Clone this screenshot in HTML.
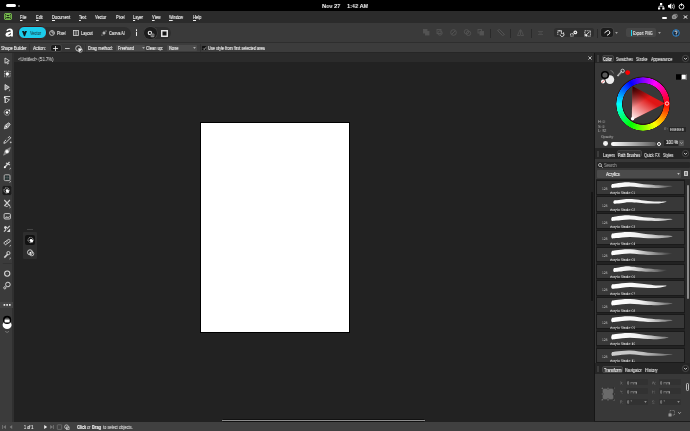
<!DOCTYPE html>
<html><head><meta charset="utf-8">
<style>
*{margin:0;padding:0;box-sizing:border-box}
html,body{width:690px;height:431px;overflow:hidden;background:#222;font-family:"Liberation Sans",sans-serif;color:#d8d8d8;position:relative}
.a{position:absolute}
.t{position:absolute;white-space:nowrap;line-height:1;transform-origin:0 0;transform:scaleX(.78);font-size:5px;color:#e4e4e4;-webkit-text-stroke:.15px currentColor;will-change:transform}
#top{left:0;top:0;width:690px;height:10.6px;background:#000}
#menu{left:0;top:10.6px;width:690px;height:12.6px;background:#2b2b2b}
#tool{left:0;top:23.2px;width:690px;height:19.8px;background:#3a3a3a}
#ctx{left:0;top:42px;width:690px;height:11.4px;background:#3c3c3c;border-top:1px solid #2e2e2e;border-bottom:.8px solid #262626}
#ltool{left:0;top:53px;width:14px;height:369px;background:#3b3b3b}
#tabbar{left:14px;top:53.4px;width:580px;height:8.3px;background:#2b2b2b}
#canvas{left:14px;top:61.6px;width:580px;height:360.4px;background:#222}
#page{left:200px;top:122px;width:150px;height:211px;background:#fff;border:1px solid #000}
#status{left:0;top:422.3px;width:690px;height:8.7px;background:#404040}
#rp{left:594px;top:53px;width:96px;height:369.3px;background:#1c1c1c}
.m{font-size:5.6px;color:#ececec;transform:scaleX(.71)}
.ic{position:absolute;overflow:visible}
</style></head><body>
<div id="tool" class="a"></div>
<div id="ctx" class="a"></div>
<div id="ltool" class="a"></div>
<div id="tabbar" class="a"></div>
<div id="canvas" class="a"></div>
<div id="page" class="a"></div>
<div id="status" class="a"></div>
<div id="rp" class="a"></div>
<div id="top" class="a"></div>
<div class="a" style="left:5.5px;top:4px;width:10.5px;height:3px;background:#fff;border-radius:1.5px"></div>
<div class="a" style="left:18px;top:4.5px;width:2px;height:2px;background:#777;border-radius:1px"></div>
<div class="t" style="left:322px;top:2.7px;font-size:6px;font-weight:bold;color:#fff;-webkit-text-stroke:0;transform:scaleX(.93)">Nov 27</div><div class="t" style="left:346.5px;top:2.7px;font-size:6px;font-weight:bold;color:#fff;-webkit-text-stroke:0;transform:scaleX(.93)">1:42 AM</div>
<svg class="a" style="left:657px;top:2px" width="30" height="8" viewBox="0 0 30 8">
 <g fill="#fff">
  <rect x="3" y="1" width="2.2" height="2"/><rect x="1" y="5.5" width="2.2" height="2"/><rect x="5.3" y="5.5" width="2.2" height="2"/>
  <path d="M4 3v1.2H2v1.3M4 4.2h2.4v1.3" stroke="#fff" stroke-width=".7" fill="none"/>
  <path d="M11 3h1.3l2-1.7v6l-2-1.7H11z"/>
  <path d="M15.3 2.8q1 1.7 0 3.4M16.6 1.8q1.7 2.7 0 5.4" stroke="#fff" stroke-width=".7" fill="none"/>
  <circle cx="24.5" cy="4.7" r="2.4" stroke="#fff" stroke-width=".9" fill="none"/>
  <rect x="24.1" y="1.3" width=".8" height="2.8"/>
 </g>
</svg>

<div id="menu" class="a"></div>
<svg class="ic" style="left:4px;top:13.2px" width="8" height="7" viewBox="0 0 8 7"><rect x=".2" y=".1" width="7.6" height="6.8" rx="1.7" fill="#8ee05e"/><rect x=".9" y=".8" width="6.2" height="5.4" rx="1" fill="#1d2a15"/><rect x="1.5" y="1.3" width="5" height="4.5" rx="1.2" fill="#8ee05e"/><rect x="2.4" y="1.9" width="3.2" height="1.2" rx=".6" fill="#1d2a15"/><rect x="2.2" y="3.7" width="3.6" height="1.5" rx=".7" fill="#1d2a15"/></svg>
<div class="t m" style="left:19.5px;top:14.8px"><u style="text-decoration-thickness:.5px;text-underline-offset:.6px">F</u>ile</div>
<div class="t m" style="left:35.5px;top:14.8px"><u style="text-decoration-thickness:.5px;text-underline-offset:.6px">E</u>dit</div>
<div class="t m" style="left:51.5px;top:14.8px"><u style="text-decoration-thickness:.5px;text-underline-offset:.6px">D</u>ocument</div>
<div class="t m" style="left:78.5px;top:14.8px"><u style="text-decoration-thickness:.5px;text-underline-offset:.6px">T</u>ext</div>
<div class="t m" style="left:95px;top:14.8px">Vector</div>
<div class="t m" style="left:115.5px;top:14.8px">Pixel</div>
<div class="t m" style="left:132.5px;top:14.8px"><u style="text-decoration-thickness:.5px;text-underline-offset:.6px">L</u>ayer</div>
<div class="t m" style="left:151.5px;top:14.8px"><u style="text-decoration-thickness:.5px;text-underline-offset:.6px">V</u>iew</div>
<div class="t m" style="left:169px;top:14.8px"><u style="text-decoration-thickness:.5px;text-underline-offset:.6px">W</u>indow</div>
<div class="t m" style="left:192.5px;top:14.8px"><u style="text-decoration-thickness:.5px;text-underline-offset:.6px">H</u>elp</div>
<div class="a" style="left:661.5px;top:16.5px;width:5px;height:2px;background:#fff;border-radius:1px"></div>
<svg class="ic" style="left:671.8px;top:14.3px" width="5.5" height="5" viewBox="0 0 5.5 5"><rect x="1.6" y=".4" width="3.5" height="3" rx=".5" fill="none" stroke="#aaa" stroke-width=".7"/><rect x=".4" y="1.6" width="3.5" height="3" rx=".5" fill="#777" stroke="#bbb" stroke-width=".7"/></svg>
<svg class="a" style="left:682.5px;top:14.5px" width="5" height="4" viewBox="0 0 5 4"><path d="M.6.4 4.4 3.6M4.4.4.6 3.6" stroke="#fff" stroke-width=".9"/></svg>
<!-- toolbar -->
<svg class="ic" style="left:4.6px;top:28.4px" width="8.5" height="8.8" viewBox="0 0 8.5 8.8"><path d="M1.2 2.4Q2.6.2 5.2.4 8 .7 7.9 3.4V8.5H5.9V7.8Q4.8 8.8 3 8.7.3 8.5.4 6.4.6 4.3 3.4 3.9L5.9 3.5Q5.9 2.2 4.6 2.1 3.4 2 2.6 3.1Z" fill="#fff"/><path d="M5.9 4.8 2.6 7.3Q4.6 7.6 5.9 6.3Z" fill="#3a3a3a"/></svg>
<div class="a" style="left:17px;top:26.6px;width:113.5px;height:13px;background:#2e2e2e;border-radius:6.5px"></div>
<div class="a" style="left:18px;top:26.3px;width:28.5px;height:13px;background:#1ccbea;border:1px solid #3e1a1a;border-radius:6px"></div>
<svg class="ic" style="left:22.3px;top:30.5px" width="5" height="5.4" viewBox="0 0 5 5.4"><path d="M0 0H1.9L2.5 1.1 3.1 0H5L3.1 5Q2.5 5.6 1.9 5Z" fill="#0e1c20"/></svg>
<div class="t" style="left:29.6px;top:30.8px;color:#1b5664">Vector</div>
<svg class="ic" style="left:48.7px;top:30px" width="6" height="6" viewBox="0 0 6 6"><circle cx="3" cy="3" r="2.4" fill="none" stroke="#d8d8d8" stroke-width=".8"/><path d="M3 .6V3h2.4" fill="none" stroke="#d8d8d8" stroke-width=".8"/></svg>
<div class="t" style="left:56.8px;top:30.8px">Pixel</div>
<svg class="ic" style="left:73px;top:30px" width="6" height="6" viewBox="0 0 6 6"><rect x=".5" y=".5" width="5" height="5" fill="none" stroke="#d8d8d8" stroke-width=".8"/><path d="M2.2.5v5M3.8.5v5" stroke="#d8d8d8" stroke-width=".6"/></svg>
<div class="t" style="left:80.9px;top:30.8px">Layout</div>
<svg class="ic" style="left:101px;top:30px" width="6" height="6" viewBox="0 0 6 6"><path d="M3 .5 3.6 2.4 5.5 3 3.6 3.6 3 5.5 2.4 3.6.5 3 2.4 2.4z" fill="#e0e0e0"/><circle cx="5" cy="1" r=".6" fill="#e0e0e0"/><circle cx="1" cy="5" r=".5" fill="#e0e0e0"/></svg>
<div class="t" style="left:108.7px;top:30.8px">Canva AI</div>
<div class="a" style="left:135.7px;top:29.2px;width:1.6px;height:7.2px;background:repeating-linear-gradient(#ececec 0 1.9px,#555 1.9px 2.6px);border-radius:.6px"></div>
<div class="a" style="left:143px;top:26.9px;width:27.8px;height:12.4px;background:#2e2e2e;border-radius:6.2px"></div>
<div class="a" style="left:144.2px;top:27.4px;width:12.4px;height:11.4px;background:#1d1d1d;box-shadow:0 0 0 .6px #474747;border-radius:5.7px"></div>
<svg class="ic" style="left:147px;top:29.5px" width="8" height="8" viewBox="0 0 8 8"><circle cx="2.9" cy="2.9" r="2.2" fill="#e8e8e8"/><circle cx="2.9" cy="2.9" r="1.1" fill="#1d1d1d"/><rect x="3.6" y="3.5" width="3.8" height="3.8" rx="1" fill="#8a8a8a"/><circle cx="4.8" cy="5" r=".5" fill="#222"/><circle cx="6.2" cy="5" r=".5" fill="#222"/></svg>
<svg class="ic" style="left:160.6px;top:29.8px" width="7" height="7" viewBox="0 0 7 7"><rect x=".75" y=".75" width="5.5" height="5.5" fill="#1d1d1d" stroke="#f0f0f0" stroke-width="1.4"/><rect x="2.5" y="2.5" width="2" height="2" fill="#111"/></svg>
<!-- right side dim icons -->
<g>
<svg class="ic" style="left:423px;top:29.3px" width="62" height="7" viewBox="0 0 62 7">
 <g fill="none" stroke="#535353" stroke-width=".9">
  <rect x=".5" y=".5" width="3.5" height="3.5" fill="#535353"/><rect x="2.5" y="2.5" width="3.5" height="3.5" fill="#535353"/>
  <rect x="14" y=".5" width="4" height="4"/><circle cx="17" cy="4" r="2.2"/>
  <circle cx="30.5" cy="3.5" r="2.8"/><path d="M29 5l3-3"/>
  <circle cx="43.5" cy="2.8" r="2.2"/><circle cx="45.5" cy="4.3" r="2.2"/>
  <rect x="55" y=".5" width="3.5" height="3.5"/><rect x="57" y="2.5" width="3.5" height="3.5" fill="#535353"/>
 </g>
</svg>
</g>
<div class="a" style="left:490px;top:28.5px;width:.8px;height:9px;background:#2a2a2a"></div>
<svg class="ic" style="left:497px;top:29.3px" width="8" height="7" viewBox="0 0 8 7"><path d="M.5 1.5l2-1 5 5-2 1z" fill="none" stroke="#535353" stroke-width=".9"/></svg>
<div class="a" style="left:510.3px;top:28.5px;width:.8px;height:9px;background:#2a2a2a"></div>
<svg class="ic" style="left:517px;top:29.3px" width="7" height="7" viewBox="0 0 7 7"><path d="M3.5.5v6M3 .8.5 6.5H3M4 .8l2.5 5.7H4" fill="none" stroke="#535353" stroke-width=".8"/></svg>
<div class="a" style="left:530.5px;top:28.5px;width:.8px;height:9px;background:#2a2a2a"></div>
<svg class="ic" style="left:538px;top:31px" width="5" height="4" viewBox="0 0 5 4"><path d="M0 .5h5M1 2h3M0 3.5h5" stroke="#535353" stroke-width=".7"/></svg>
<div class="a" style="left:553.6px;top:27.8px;width:40.5px;height:9.6px;background:#2f2f2f;border-radius:2.5px"></div>
<svg class="ic" style="left:556.5px;top:29.5px" width="36" height="7" viewBox="0 0 36 7">
 <g fill="none" stroke="#ececec" stroke-width=".8">
  <path d="M.8 4.8V.8h4" stroke-dasharray="1.1 .6"/><path d="M.8.8h3.6v3.2" />
  <path d="M3.2 4.6a1.9 1.9 0 1 0 3.3-1.3" stroke-width=".9"/><path d="M6.6 2.2v1.4H5.2" stroke-width=".7"/>
  <rect x="13.6" y="3.6" width="2.6" height="2.6" stroke-dasharray="1 .5"/>
  <circle cx="18.3" cy="2.4" r="1.9" fill="#ececec" stroke="none"/><circle cx="18.3" cy="2.4" r=".6" fill="#2e2e2e" stroke="none"/>
  <rect x="27.8" y=".8" width="5.6" height="5.4" stroke-dasharray="1.2 .6"/>
  <path d="M28.4 5.8 32.6 1.6" stroke-width=".9"/><path d="M28.3 3.3v2.6h2.6z" fill="#ececec" stroke="none"/>
 </g>
</svg>
<div class="a" style="left:597.2px;top:28.5px;width:.8px;height:9px;background:#2a2a2a"></div>
<div class="a" style="left:601.2px;top:28.1px;width:11.7px;height:8.6px;background:#1c1c1c;box-shadow:0 0 0 .8px #444;border-radius:2.5px"></div>
<svg class="ic" style="left:598px;top:26px" width="18" height="13" viewBox="598 26 18 13"><path d="M604.5 32.9 607 30.9A1.85 1.85 0 0 1 608.9 34.2L607 35.3" fill="none" stroke="#f2f2f2" stroke-width="1"/></svg>
<svg class="ic" style="left:615.2px;top:31.8px" width="3" height="2" viewBox="0 0 3 2"><path d="M.1.3H2.9L1.5 1.8Z" fill="#c0c0c0"/></svg>
<div class="a" style="left:626.2px;top:28.4px;width:30.2px;height:8.6px;background:#464646;border-radius:2px"></div>
<div class="a" style="left:630.8px;top:29.6px;width:1.2px;height:6px;background:#1ed2ee"></div>
<div class="t" style="left:633.3px;top:30.5px;color:#e0e0e0;transform:scaleX(.74)">Export PNG</div>
<svg class="ic" style="left:658px;top:32px" width="3" height="2" viewBox="0 0 3 2"><path d="M.1.3H2.9L1.5 1.8Z" fill="#c0c0c0"/></svg>
<svg class="ic" style="left:672px;top:29px" width="8" height="8" viewBox="0 0 8 8"><circle cx="4" cy="4" r="3.3" fill="#1b2a3a" stroke="#2d8fe0" stroke-width=".9"/><path d="M2.9 3a1.1 1.1 0 1 1 1.3 1.1v.9" fill="none" stroke="#fff" stroke-width=".8"/><rect x="3.8" y="5.6" width=".8" height=".8" fill="#fff"/></svg>
<!-- context toolbar -->
<div class="t" style="left:1.4px;top:46px;color:#e8e8e8;transform:scaleX(.81)">Shape Builder</div>
<div class="a" style="left:29.3px;top:44px;width:.8px;height:8px;background:#333"></div>
<div class="t" style="left:33.3px;top:46px;color:#e8e8e8;transform:scaleX(.84)">Action:</div>
<div class="a" style="left:50px;top:44.4px;width:34px;height:7.4px;background:#363636;border-radius:1.5px"></div>
<div class="a" style="left:50.8px;top:45px;width:9.8px;height:6.2px;background:#1e1e1e;box-shadow:0 0 0 .7px #4a4a4a;border-radius:1.5px"></div>
<svg class="ic" style="left:53.4px;top:45.8px" width="5" height="5" viewBox="0 0 5 5"><path d="M2.5 0v5M0 2.5h5" stroke="#f0f0f0" stroke-width=".8"/></svg>
<svg class="ic" style="left:64.8px;top:47.6px" width="5" height="1" viewBox="0 0 5 1"><path d="M0 .5h4.7" stroke="#bdbdbd" stroke-width="1"/></svg>
<svg class="ic" style="left:74.8px;top:44.6px" width="8" height="8" viewBox="0 0 8 8"><circle cx="3.4" cy="3.4" r="2.7" fill="none" stroke="#d8d8d8" stroke-width=".8"/><path d="M3.2 3.2 7.4 4.6 5.6 5.4 4.8 7.4z" fill="#f2f2f2"/><circle cx="5.3" cy="5.3" r="2" fill="none" stroke="#d8d8d8" stroke-width=".6"/></svg>
<div class="a" style="left:84.5px;top:44px;width:.8px;height:8px;background:#333"></div>
<div class="t" style="left:88px;top:46px;color:#e8e8e8;transform:scaleX(.82)">Drag method:</div>
<div class="a" style="left:116.2px;top:45px;width:29px;height:6px;background:#4a4a4a;border-radius:1px"></div>
<div class="t" style="left:118px;top:46px;color:#e8e8e8;transform:scaleX(.75)">Freehand</div>
<svg class="ic" style="left:142.2px;top:47px" width="3" height="2" viewBox="0 0 3 2"><path d="M.1.3H2.9L1.5 1.8Z" fill="#c8c8c8"/></svg>
<div class="t" style="left:146.4px;top:46px;color:#e8e8e8;transform:scaleX(.8)">Clean up:</div>
<div class="a" style="left:167px;top:45px;width:30px;height:6px;background:#4a4a4a;border-radius:1px"></div>
<div class="t" style="left:168.5px;top:46px;color:#e8e8e8">None</div>
<svg class="ic" style="left:192.8px;top:47px" width="3" height="2" viewBox="0 0 3 2"><path d="M.1.3H2.9L1.5 1.8Z" fill="#c8c8c8"/></svg>
<div class="a" style="left:199.5px;top:44px;width:.8px;height:8px;background:#333"></div>
<div class="a" style="left:202.2px;top:46px;width:4px;height:4px;background:#111;border-radius:.5px"></div>
<svg class="ic" style="left:202.7px;top:46.6px" width="3" height="3" viewBox="0 0 3 3"><path d="M.3 1.6 1.2 2.5 2.8.4" fill="none" stroke="#fff" stroke-width=".6"/></svg>
<div class="t" style="left:208px;top:46px;color:#e8e8e8">Use style from first selected area</div>
<!-- left toolbar -->
<div class="a" style="left:12.4px;top:53px;width:1.6px;height:369px;background:#303030"></div>
<svg class="ic" style="left:0;top:53px" width="14" height="290" viewBox="0 53 14 290">
 <g fill="none" stroke="#d6d6d6" stroke-width=".9" stroke-linejoin="round">
  <!-- 1 move -->
  <path d="M5 58l4.3 2.8-1.9.7 1 2-1 .5-1-2-1.4 1.3z"/>
  <!-- 2 node glow -->
  <g stroke="#cfcfcf" stroke-width=".8" stroke-dasharray="1 .8"><rect x="4.5" y="71.2" width="5.6" height="5.6"/></g>
  <circle cx="7.3" cy="74" r="1.7" fill="#fff" stroke="none"/>
  <!-- 3 node -->
  <path d="M5 84.5l4.3 2.8-4.3 2.8z" fill="#9a9a9a"/>
  <path d="M9.6 89.5q.6 1.3-.8 1.6" stroke-width=".7"/>
  <!-- 4 corner -->
  <path d="M4.2 96.5h6M4.7 97.5l4.8 2.3-3.3 3" />
  <path d="M5.2 98v5" stroke-width="1.3"/>
  <circle cx="4.6" cy="97.5" r=".8" fill="#fff" stroke="none"/>
  <!-- 5 gear/target -->
  <circle cx="7" cy="112.5" r="2.8" stroke-dasharray="1.2 .7"/>
  <circle cx="7" cy="112.5" r="1.3" fill="#fff" stroke="none"/>
  <circle cx="9.3" cy="110.2" r=".8" fill="#fff" stroke="none"/>
  <!-- 6 pen -->
  <path d="M4.3 128.8l1-3.6 3.5-2.4 1.4 1.4-2.4 3.5z" fill="#8a8a8a"/>
  <circle cx="6.4" cy="126.5" r=".7" fill="#fff" stroke="none"/>
  <!-- 7 pencil -->
  <path d="M4.4 141.5l5-5 1.3 1.3-5 5-1.8.5z" stroke-width="1"/>
  <path d="M6 140l2.2-2.2" stroke="#222" stroke-width=".8"/>
  <circle cx="10.7" cy="142.3" r=".9" fill="#bbb" stroke="none"/>
  <!-- 8 brush glow -->
  <path d="M3.6 155.2 5.4 150.4 10.4 147.6 8.6 152.4z" fill="#6e6e6e" stroke="#a8a8a8" stroke-width=".6"/>
  <circle cx="7" cy="151.4" r="1.5" fill="#fff" stroke="none"/>
  <circle cx="7" cy="151.4" r="2.4" fill="#fff" fill-opacity=".25" stroke="none"/>
  <!-- 9 paint -->
  <path d="M4.5 167.5l5-5.5M6 163l4 2" stroke-width="1.3" stroke="#d0d0d0"/>
  <circle cx="4.8" cy="167.2" r="1" fill="#fff" stroke="none"/>
  <path d="M10.3 167.8q.6 1.2-.8 1.5" stroke-width=".7"/>
  <!-- 10 rect -->
  <rect x="4.2" y="174.8" width="5.8" height="5.8" rx="1" stroke="#b0b0b0" stroke-width="1"/>
  <rect x="5.2" y="175.8" width="3.8" height="3.8" fill="#1e3030" stroke="none"/>
  <path d="M7.1 175.8v3.8M5.2 177.7h3.8" stroke="#777" stroke-width=".4"/>
  <path d="M10.3 181q.6 1.2-.8 1.5" stroke-width=".7"/>
 </g>
 <!-- 11 selected -->
 <rect x="2.1" y="185.5" width="9.7" height="10" rx="2" fill="#1c1c1c" stroke="#474747" stroke-width=".5"/>
 <g fill="none" stroke="#d6d6d6" stroke-width=".9">
  <circle cx="6.6" cy="190.4" r="2.6" stroke-dasharray="1 .7"/>
  <path d="M6.3 190.2h2.6v2.6h-2.6z" fill="#fff" stroke="none"/>
  <circle cx="7.1" cy="190.6" r="1.3" fill="#fff" stroke="none"/>
  <!-- 12 crop -->
  <path d="M4.3 200l5.6 6M9.9 200l-5.6 6" stroke-width="1.1" stroke="#cfcfcf"/>
  <path d="M5 205.5q1 1.6 2.8.8" stroke-width=".9"/>
  <path d="M10.3 206.5q.6 1.2-.8 1.5" stroke-width=".7"/>
  <!-- 13 image -->
  <rect x="4.1" y="213.6" width="6.3" height="5.4" rx="1" stroke-width=".9"/>
  <path d="M4.8 218.3l2-1.6 1.3 1 1.6-1.3" fill="#ddd" stroke-width=".7"/>
  <!-- 14 transparency -->
  <ellipse cx="5.6" cy="227.6" rx="1.6" ry="1.4" fill="#d8d8d8" stroke="none" transform="rotate(40 5.6 227.6)"/>
  <path d="M9.8 225.8 4 231.6" stroke="#d0d0d0" stroke-width="1.2"/>
  <path d="M6.8 232 10.1 232 10.1 228.4z" fill="#d8d8d8" stroke="none"/>
  <circle cx="6.6" cy="228.9" r=".6" fill="#111" stroke="none"/>
  <!-- 15 ruler -->
  <rect x="3.9" y="240.7" width="6.5" height="2.6" rx=".6" transform="rotate(-35 7.1 242)" stroke-width=".9"/>
  <path d="M6 242.6l.8-.6M7.4 241.6l.8-.6" stroke-width=".6"/>
  <path d="M10.3 245q.6 1.2-.8 1.5" stroke-width=".7"/>
  <!-- 16 eyedropper -->
  <path d="M4.3 257.6l3.6-3.6" stroke-width="1.6" stroke="#cfcfcf"/>
  <circle cx="8.4" cy="253.1" r="1.6" stroke-width=".9"/>
  <path d="M10.3 257.6q.6 1.2-.8 1.5" stroke-width=".7"/>
 </g>
 <rect x="2.8" y="263" width="9" height=".6" fill="#2e2e2e"/>
 <g fill="none" stroke="#d6d6d6" stroke-width=".9">
  <!-- 17 hand -->
  <circle cx="7.2" cy="273.6" r="2.6" stroke-width="1.1"/>
  <circle cx="7.2" cy="273.6" r=".7" fill="#666" stroke="none"/>
  <!-- 18 zoom -->
  <circle cx="7.9" cy="284.5" r="2.3" stroke-width="1"/>
  <circle cx="4.8" cy="287.8" r="1.1" stroke-width=".9"/>
 </g>
 <!-- more -->
 <rect x="0" y="302" width="13" height="6" fill="#444"/>
 <g fill="#e8e8e8"><rect x="3.6" y="304" width="1.6" height="1.8"/><rect x="6.3" y="304" width="1.6" height="1.8"/><rect x="9" y="304" width="1.6" height="1.8"/></g>
 <!-- color well -->
 <ellipse cx="7.1" cy="325" rx="4.5" ry="4" fill="#fff"/>
 <circle cx="7.1" cy="319.9" r="4.1" fill="#000"/>
 <circle cx="7.1" cy="319.9" r="2.5" fill="#555"/>
 <rect x="4.6" y="319.6" width="5" height="2.8" fill="#fff"/>
 <path d="M5.2 331.3l1.9 1.2 1.9-1.2" fill="none" stroke="#999" stroke-width=".6"/>
</svg>
<!-- canvas extras -->
<div class="t" style="left:18px;top:56.6px;color:#e4e4e4;-webkit-text-stroke:0;transform:scaleX(.85)">&lt;Untitled&gt; (51.7%)</div>
<svg class="ic" style="left:587.8px;top:56px" width="4" height="4" viewBox="0 0 4 4"><path d="M.4.4 3.6 3.6M3.6.4.4 3.6" stroke="#ddd" stroke-width=".8"/></svg>
<div class="a" style="left:221.2px;top:418.5px;width:204.6px;height:3px;background:#8c8c8c;border:.6px solid #111;border-radius:1.5px"></div>
<div class="a" style="left:590.6px;top:191.3px;width:2.8px;height:111px;background:#8e8e8e;border:.5px solid #151515;border-radius:1.4px"></div>
<!-- floating toolbar -->
<div class="a" style="left:26.6px;top:228.6px;width:6.4px;height:1px;background:#444"></div>
<div class="a" style="left:22.9px;top:232.2px;width:14.4px;height:26.7px;background:#2e2e2e;border-radius:1px"></div>
<div class="a" style="left:24.9px;top:235px;width:9.8px;height:10px;background:#111;border-radius:2px"></div>
<svg class="ic" style="left:22.9px;top:232.2px" width="15" height="27" viewBox="0 0 15 27">
 <g fill="none" stroke="#d8d8d8" stroke-width=".8">
  <circle cx="7.6" cy="8" r="2.6" stroke-dasharray="1 .7"/>
  <rect x="7.4" y="7.8" width="2.5" height="2.5" fill="#fff" stroke="none"/>
  <circle cx="8" cy="8.3" r="1.3" fill="#fff" stroke="none"/>
  <circle cx="7" cy="20.3" r="2.5" stroke-width=".9"/>
  <circle cx="8.8" cy="21.8" r="2" stroke-width=".8"/>
  <circle cx="7.4" cy="20.8" r=".9" fill="#fff" stroke="none"/>
 </g>
</svg>
<!-- right panel -->
<div class="a" style="left:593.8px;top:53px;width:1.6px;height:368.4px;background:#161616"></div>
<div class="a" style="left:595.4px;top:53px;width:94.6px;height:10.4px;background:#252525"></div>
<div class="a" style="left:595.4px;top:63.4px;width:94.6px;height:84.4px;background:#383838"></div>
<div class="a" style="left:597px;top:55.4px;width:1.9px;height:6.6px;background:#3c3c3c"></div>
<div class="a" style="left:602.1px;top:55px;width:11.6px;height:7px;background:#333;border:.6px solid #444;border-radius:2px"></div>
<div class="t" style="left:603.4px;top:57.2px;color:#f0f0f0;transform:scaleX(.75)">Color</div>
<div class="t" style="left:615.9px;top:57.2px;color:#dcdcdc;transform:scaleX(.78)">Swatches</div>
<div class="t" style="left:636px;top:57.2px;color:#dcdcdc;transform:scaleX(.79)">Stroke</div>
<div class="t" style="left:650.6px;top:57.2px;color:#dcdcdc;transform:scaleX(.79)">Appearance</div>
<svg class="ic" style="left:682px;top:55px" width="7" height="7" viewBox="0 0 7 7"><circle cx="3.5" cy="3.5" r="3.1" fill="#1e1e1e" stroke="#5a5a5a" stroke-width=".7"/><path d="M2 2.9 3.5 4.4 5 2.9" fill="none" stroke="#fff" stroke-width=".8"/></svg>
<svg class="ic" style="left:595px;top:63px" width="95" height="85" viewBox="595 63 95 85">
 <defs>
  <linearGradient id="gw" gradientUnits="userSpaceOnUse" x1="632" y1="120" x2="649" y2="94.7"><stop offset="0" stop-color="#fff"/><stop offset=".85" stop-color="#fff" stop-opacity="0"/></linearGradient>
  <linearGradient id="gb" gradientUnits="userSpaceOnUse" x1="632.4" y1="86" x2="649" y2="111.5"><stop offset="0" stop-color="#000" stop-opacity=".9"/><stop offset=".62" stop-color="#000" stop-opacity="0"/></linearGradient>
 </defs>
 <circle cx="609.9" cy="79.6" r="4.3" fill="#ececec"/>
 <circle cx="605" cy="75" r="4.1" fill="#000"/>
 <circle cx="605" cy="75" r="2.6" fill="#595959"/>
 <circle cx="603" cy="81.6" r="2" fill="#fff"/>
 <path d="M601.8 82.8 604.2 80.4" stroke="#e02020" stroke-width=".8"/>
 <path d="M610.5 70.5q2.5.3 3 3" fill="none" stroke="#999" stroke-width=".6"/>
 <path d="M617.5 76l4.6-4.6" stroke="#d0d0d0" stroke-width="1.6"/>
 <circle cx="622.6" cy="70.9" r="1.7" fill="none" stroke="#d0d0d0" stroke-width=".9"/>
 <path d="M618.5 75.2l3.2-3.2" stroke="#383838" stroke-width=".6"/>
 <circle cx="627.7" cy="72.6" r="2.4" fill="#f00"/>
 <rect x="676" y="74.2" width="5.2" height="5.5" fill="#000"/>
 <rect x="681.2" y="74.2" width="5.3" height="5.5" fill="#fff"/>
 <rect x="681.7" y="74.7" width="4.3" height="4.5" fill="none" stroke="#000" stroke-width=".5"/>
 <circle cx="643" cy="103.5" r="23.7" fill="none" stroke="#2a1414" stroke-width="6.8"/>
</svg>
<div class="a" style="left:616px;top:76.5px;width:54px;height:54px;border-radius:50%;background:conic-gradient(from 90deg,#f00,#ff0,#0f0,#0ff,#00f,#f0f,#f00);-webkit-mask:radial-gradient(circle,transparent 20.6px,#000 21.2px,#000 26.4px,transparent 26.9px)"></div>
<svg class="ic" style="left:595px;top:63px" width="95" height="85" viewBox="595 63 95 85">
 <path d="M665 103.5 632.4 86 631.8 120z" fill="#e01515"/>
 <path d="M665 103.5 632.4 86 631.8 120z" fill="url(#gw)"/>
 <path d="M665 103.5 632.4 86 631.8 120z" fill="url(#gb)"/>
 <circle cx="667" cy="103.5" r="1.7" fill="none" stroke="#fff" stroke-width=".8"/>
 <circle cx="632.6" cy="118.8" r="1.7" fill="#fff"/>
</svg>
<div class="t" style="left:598.4px;top:120.2px;font-size:4.2px;color:#b8b8b8;-webkit-text-stroke:0;transform:scaleX(.9)">H: 0</div>
<div class="t" style="left:598.4px;top:124.6px;font-size:4.2px;color:#b8b8b8;-webkit-text-stroke:0;transform:scaleX(.9)">S: 0</div>
<div class="t" style="left:598.4px;top:129px;font-size:4.2px;color:#b8b8b8;-webkit-text-stroke:0;transform:scaleX(.9)">L: 92</div>
<div class="t" style="left:664.3px;top:127.4px;font-size:4.4px;color:#c0c0c0;-webkit-text-stroke:0;transform:scaleX(.9)">#:</div>
<div class="a" style="left:668.7px;top:126.7px;width:17.2px;height:5.5px;background:#262626"></div>
<div class="t" style="left:670.2px;top:127.5px;font-size:4.4px;color:#f0f0f0;-webkit-text-stroke:0;transform:scaleX(.8)">EBEBEB</div>
<div class="t" style="left:601.2px;top:134.8px;font-size:4.3px;color:#c0c0c0;-webkit-text-stroke:0;transform:scaleX(.82)">Opacity</div>
<div class="a" style="left:602.6px;top:140.5px;width:5.4px;height:5.2px;background:#f4f4f4;border-radius:50%"></div>
<div class="a" style="left:610.8px;top:141.8px;width:45.5px;height:3.8px;background:linear-gradient(90deg,#fff,#5a5a5a);border-radius:2px"></div>
<div class="a" style="left:656.6px;top:141.6px;width:4.2px;height:4.2px;border:.8px solid #fff;background:#333;border-radius:50%"></div>
<div class="a" style="left:663.8px;top:139.8px;width:13.8px;height:6.2px;background:#262626"></div>
<div class="t" style="left:665.5px;top:141px;font-size:4.7px;color:#f4f4f4;-webkit-text-stroke:.1px #f4f4f4;transform:scaleX(.92)">100 %</div>
<div class="a" style="left:679px;top:139.8px;width:4.8px;height:6.2px;background:#555;border-radius:1px"></div>
<svg class="ic" style="left:679.9px;top:142px" width="3" height="2" viewBox="0 0 3 2"><path d="M.2.3 1.5 1.6 2.8.3" fill="none" stroke="#ccc" stroke-width=".6"/></svg>
<div class="a" style="left:595.4px;top:147.8px;width:94.6px;height:12px;background:#252525"></div>
<div class="a" style="left:595.4px;top:158.8px;width:94.6px;height:204.4px;background:#383838"></div>
<div class="a" style="left:597px;top:150.5px;width:1.9px;height:6.6px;background:#3c3c3c"></div>
<div class="t" style="left:602.6px;top:152.8px;color:#dcdcdc;transform:scaleX(.8)">Layers</div>
<div class="a" style="left:617px;top:150px;width:25px;height:7.2px;background:#333;border:.6px solid #444;border-radius:2px"></div>
<div class="t" style="left:618.4px;top:152.8px;color:#fafafa;-webkit-text-stroke:.05px #fafafa;transform:scaleX(.74)">Path Brushes</div>
<div class="t" style="left:643.9px;top:152.8px;color:#dcdcdc;transform:scaleX(.77)">Quick FX</div>
<div class="t" style="left:663.2px;top:152.8px;color:#dcdcdc;transform:scaleX(.76)">Styles</div>
<svg class="ic" style="left:682px;top:150px" width="7" height="7" viewBox="0 0 7 7"><circle cx="3.5" cy="3.5" r="3.1" fill="#1e1e1e" stroke="#5a5a5a" stroke-width=".7"/><path d="M2 2.9 3.5 4.4 5 2.9" fill="none" stroke="#fff" stroke-width=".8"/></svg>
<div class="a" style="left:596.5px;top:161.7px;width:93.5px;height:6.5px;background:#262626;border-radius:1px"></div>
<svg class="ic" style="left:598px;top:162.5px" width="5" height="5" viewBox="0 0 5 5"><circle cx="2" cy="2" r="1.5" fill="none" stroke="#ddd" stroke-width=".7"/><path d="M3.1 3.1 4.6 4.6" stroke="#ddd" stroke-width=".8"/></svg>
<div class="t" style="left:603.8px;top:163.3px;color:#8a8a8a;transform:scaleX(.8)">Search</div>
<div class="a" style="left:596.5px;top:170px;width:84.1px;height:7.6px;background:#4b4b4b;border-radius:1px"></div>
<div class="t" style="left:605.7px;top:171.6px;color:#f0f0f0;transform:scaleX(.8)">Acrylics</div>
<svg class="ic" style="left:676.8px;top:172.8px" width="3" height="2" viewBox="0 0 3 2"><path d="M.2.3H2.8L1.5 1.7Z" fill="#e8e8e8"/></svg>
<div class="a" style="left:683.7px;top:170.8px;width:4.5px;height:5.3px;background:#8c8c8c;border:.7px solid #c8c8c8;border-radius:.5px"></div>
<div class="a" style="left:595.5px;top:178.6px;width:89.5px;height:184.6px;background:#222"></div>
<div class="a" style="left:595.5px;top:179.6px;width:89.5px;height:15.4px;background:#383838;border:1.1px solid #1a1a1a"></div>
<div class="t" style="left:601.8px;top:186.9px;font-size:7.2px;color:#d0d0d0;-webkit-text-stroke:0;transform:scale(.45,.5)">128</div>
<svg class="ic" style="left:610.5px;top:179.6px" width="62" height="10" viewBox="-1 0 62 10"><defs><linearGradient id="s0" x1="0" x2="1"><stop offset="0" stop-color="#fff"/><stop offset="0.45" stop-color="#f0f0f0"/><stop offset="1" stop-color="#fff" stop-opacity="0.12"/></linearGradient></defs><path d="M0.00 4.10 C0.67 3.99 1.00 3.68 4.00 3.40 C7.00 3.12 12.67 2.21 18.00 2.40 C23.33 2.60 30.67 4.04 36.00 4.57 C41.33 5.10 46.00 5.36 50.00 5.60 C54.00 5.83 58.33 5.92 60.00 5.98 Q61.00 6.30 60.00 6.62 C58.33 6.81 54.00 7.60 50.00 7.80 C46.00 8.00 41.33 8.06 36.00 7.83 C30.67 7.59 23.33 6.43 18.00 6.39 C12.67 6.36 7.00 7.32 4.00 7.60 C1.00 7.88 0.67 8.01 0.00 8.09 Q-1.60 6.70 0.00 4.10Z" fill="url(#s0)" opacity="1"/></svg>
<div class="t" style="left:609.8px;top:191.2px;font-size:8px;color:#e0e0e0;-webkit-text-stroke:0;transform:scale(.42,.5)">Acrylic Stroke 01</div>
<div class="a" style="left:595.5px;top:196.4px;width:89.5px;height:15.4px;background:#383838;border:0.4px solid #1a1a1a"></div>
<div class="t" style="left:601.8px;top:203.7px;font-size:7.2px;color:#d0d0d0;-webkit-text-stroke:0;transform:scale(.45,.5)">128</div>
<svg class="ic" style="left:610.5px;top:196.4px" width="62" height="10" viewBox="-1 0 62 10"><defs><linearGradient id="s1" x1="0" x2="1"><stop offset="0" stop-color="#fff"/><stop offset="0.7" stop-color="#f0f0f0"/><stop offset="1" stop-color="#fff" stop-opacity="0.9"/></linearGradient></defs><path d="M2.00 4.50 C3.17 4.39 6.33 4.07 9.00 3.82 C11.67 3.57 13.50 2.82 18.00 3.00 C22.50 3.18 31.17 4.46 36.00 4.90 C40.83 5.33 44.00 5.51 47.00 5.62 C50.00 5.73 52.83 5.56 54.00 5.55 Q55.00 5.80 54.00 6.05 C52.83 6.27 50.00 7.14 47.00 7.38 C44.00 7.62 40.83 7.70 36.00 7.50 C31.17 7.30 22.50 6.25 18.00 6.20 C13.50 6.14 11.67 6.93 9.00 7.18 C6.33 7.43 3.17 7.61 2.00 7.70 Q0.40 6.58 2.00 4.50Z" fill="url(#s1)" opacity="1"/></svg>
<div class="t" style="left:609.8px;top:208.0px;font-size:8px;color:#e0e0e0;-webkit-text-stroke:0;transform:scale(.42,.5)">Acrylic Stroke 02</div>
<div class="a" style="left:595.5px;top:213.2px;width:89.5px;height:15.4px;background:#383838;border:0.4px solid #1a1a1a"></div>
<div class="t" style="left:601.8px;top:220.5px;font-size:7.2px;color:#d0d0d0;-webkit-text-stroke:0;transform:scale(.45,.5)">128</div>
<svg class="ic" style="left:610.5px;top:213.2px" width="62" height="10" viewBox="-1 0 62 10"><defs><linearGradient id="s2" x1="0" x2="1"><stop offset="0" stop-color="#fff"/><stop offset="0.55" stop-color="#f0f0f0"/><stop offset="1" stop-color="#fff" stop-opacity="0.6"/></linearGradient></defs><path d="M0.00 4.10 C0.67 3.99 1.00 3.68 4.00 3.40 C7.00 3.12 12.67 2.21 18.00 2.40 C23.33 2.60 30.67 4.04 36.00 4.57 C41.33 5.10 46.00 5.36 50.00 5.60 C54.00 5.83 58.33 5.92 60.00 5.98 Q61.00 6.30 60.00 6.62 C58.33 6.81 54.00 7.60 50.00 7.80 C46.00 8.00 41.33 8.06 36.00 7.83 C30.67 7.59 23.33 6.43 18.00 6.39 C12.67 6.36 7.00 7.32 4.00 7.60 C1.00 7.88 0.67 8.01 0.00 8.09 Q-1.60 6.70 0.00 4.10Z" fill="url(#s2)" opacity="1"/></svg>
<div class="t" style="left:609.8px;top:224.8px;font-size:8px;color:#e0e0e0;-webkit-text-stroke:0;transform:scale(.42,.5)">Acrylic Stroke 03</div>
<div class="a" style="left:595.5px;top:230.0px;width:89.5px;height:15.4px;background:#383838;border:0.4px solid #1a1a1a"></div>
<div class="t" style="left:601.8px;top:237.3px;font-size:7.2px;color:#d0d0d0;-webkit-text-stroke:0;transform:scale(.45,.5)">128</div>
<svg class="ic" style="left:610.5px;top:230.0px" width="62" height="10" viewBox="-1 0 62 10"><defs><linearGradient id="s3" x1="0" x2="1"><stop offset="0" stop-color="#fff"/><stop offset="0.45" stop-color="#f0f0f0"/><stop offset="1" stop-color="#fff" stop-opacity="0.45"/></linearGradient></defs><path d="M0.00 3.61 C0.67 3.48 1.00 3.16 4.00 2.88 C7.00 2.59 12.67 1.69 18.00 1.91 C23.33 2.12 30.67 3.60 36.00 4.17 C41.33 4.73 46.00 5.03 50.00 5.32 C54.00 5.61 58.33 5.81 60.00 5.91 Q61.00 6.30 60.00 6.69 C58.33 6.92 54.00 7.82 50.00 8.08 C46.00 8.33 41.33 8.43 36.00 8.23 C30.67 8.04 23.33 6.91 18.00 6.89 C12.67 6.88 7.00 7.84 4.00 8.12 C1.00 8.41 0.67 8.52 0.00 8.59 Q-1.60 6.85 0.00 3.61Z" fill="url(#s3)" opacity="1"/></svg>
<div class="t" style="left:609.8px;top:241.6px;font-size:8px;color:#e0e0e0;-webkit-text-stroke:0;transform:scale(.42,.5)">Acrylic Stroke 04</div>
<div class="a" style="left:595.5px;top:246.8px;width:89.5px;height:15.4px;background:#383838;border:0.4px solid #1a1a1a"></div>
<div class="t" style="left:601.8px;top:254.1px;font-size:7.2px;color:#d0d0d0;-webkit-text-stroke:0;transform:scale(.45,.5)">128</div>
<svg class="ic" style="left:610.5px;top:246.8px" width="62" height="10" viewBox="-1 0 62 10"><defs><linearGradient id="s4" x1="0" x2="1"><stop offset="0" stop-color="#fff"/><stop offset="0.35" stop-color="#f0f0f0"/><stop offset="1" stop-color="#fff" stop-opacity="0.0"/></linearGradient></defs><path d="M0.00 3.91 C0.67 3.79 1.00 3.47 4.00 3.19 C7.00 2.91 12.67 2.00 18.00 2.21 C23.33 2.41 30.67 3.86 36.00 4.41 C41.33 4.96 46.00 5.23 50.00 5.49 C54.00 5.74 58.33 5.88 60.00 5.95 Q61.00 6.30 60.00 6.65 C58.33 6.86 54.00 7.69 50.00 7.91 C46.00 8.14 41.33 8.21 36.00 7.99 C30.67 7.77 23.33 6.62 18.00 6.59 C12.67 6.56 7.00 7.53 4.00 7.81 C1.00 8.09 0.67 8.21 0.00 8.29 Q-1.60 6.76 0.00 3.91Z" fill="url(#s4)" opacity="1"/></svg>
<div class="t" style="left:609.8px;top:258.4px;font-size:8px;color:#e0e0e0;-webkit-text-stroke:0;transform:scale(.42,.5)">Acrylic Stroke 05</div>
<div class="a" style="left:595.5px;top:263.6px;width:89.5px;height:15.4px;background:#383838;border:0.4px solid #1a1a1a"></div>
<div class="t" style="left:601.8px;top:270.9px;font-size:7.2px;color:#d0d0d0;-webkit-text-stroke:0;transform:scale(.45,.5)">128</div>
<svg class="ic" style="left:610.5px;top:263.6px" width="62" height="10" viewBox="-1 0 62 10"><defs><linearGradient id="s5" x1="0" x2="1"><stop offset="0" stop-color="#fff"/><stop offset="0.3" stop-color="#f0f0f0"/><stop offset="1" stop-color="#fff" stop-opacity="0.0"/></linearGradient></defs><path d="M2.00 4.10 C2.83 3.99 4.33 3.68 7.00 3.40 C9.67 3.12 13.17 2.21 18.00 2.40 C22.83 2.60 31.00 4.04 36.00 4.57 C41.00 5.10 44.83 5.36 48.00 5.60 C51.17 5.83 53.83 5.92 55.00 5.98 Q56.00 6.30 55.00 6.62 C53.83 6.81 51.17 7.60 48.00 7.80 C44.83 8.00 41.00 8.06 36.00 7.83 C31.00 7.59 22.83 6.43 18.00 6.39 C13.17 6.36 9.67 7.32 7.00 7.60 C4.33 7.88 2.83 8.01 2.00 8.09 Q0.40 6.70 2.00 4.10Z" fill="url(#s5)" opacity="1"/></svg>
<div class="t" style="left:609.8px;top:275.2px;font-size:8px;color:#e0e0e0;-webkit-text-stroke:0;transform:scale(.42,.5)">Acrylic Stroke 06</div>
<div class="a" style="left:595.5px;top:280.4px;width:89.5px;height:15.4px;background:#383838;border:0.4px solid #1a1a1a"></div>
<div class="t" style="left:601.8px;top:287.7px;font-size:7.2px;color:#d0d0d0;-webkit-text-stroke:0;transform:scale(.45,.5)">128</div>
<svg class="ic" style="left:610.5px;top:280.4px" width="62" height="10" viewBox="-1 0 62 10"><defs><linearGradient id="s6" x1="0" x2="1"><stop offset="0" stop-color="#fff"/><stop offset="0.8" stop-color="#f0f0f0"/><stop offset="1" stop-color="#fff" stop-opacity="0.95"/></linearGradient></defs><path d="M0.00 4.51 C0.67 4.44 1.00 4.38 4.00 4.09 C7.00 3.81 12.67 2.74 18.00 2.81 C23.33 2.87 31.33 4.03 36.00 4.49 C40.67 4.95 43.00 5.38 46.00 5.54 C49.00 5.71 52.67 5.48 54.00 5.47 Q55.00 5.80 54.00 6.13 C52.67 6.42 49.00 7.56 46.00 7.86 C43.00 8.15 40.67 8.05 36.00 7.91 C31.33 7.77 23.33 6.90 18.00 6.99 C12.67 7.09 7.00 8.22 4.00 8.50 C1.00 8.79 0.67 8.66 0.00 8.69 Q-1.60 7.23 0.00 4.51Z" fill="url(#s6)" opacity="1"/></svg>
<div class="t" style="left:609.8px;top:292.0px;font-size:8px;color:#e0e0e0;-webkit-text-stroke:0;transform:scale(.42,.5)">Acrylic Stroke 07</div>
<div class="a" style="left:595.5px;top:297.2px;width:89.5px;height:15.4px;background:#383838;border:0.4px solid #1a1a1a"></div>
<div class="t" style="left:601.8px;top:304.5px;font-size:7.2px;color:#d0d0d0;-webkit-text-stroke:0;transform:scale(.45,.5)">128</div>
<svg class="ic" style="left:610.5px;top:297.2px" width="62" height="10" viewBox="-1 0 62 10"><defs><linearGradient id="s7" x1="0" x2="1"><stop offset="0" stop-color="#fff"/><stop offset="0.5" stop-color="#f0f0f0"/><stop offset="1" stop-color="#fff" stop-opacity="0.2"/></linearGradient></defs><path d="M0.00 3.81 C0.67 3.69 1.00 3.37 4.00 3.08 C7.00 2.80 12.67 1.90 18.00 2.11 C23.33 2.31 30.67 3.77 36.00 4.33 C41.33 4.88 46.00 5.16 50.00 5.43 C54.00 5.70 58.33 5.85 60.00 5.94 Q61.00 6.30 60.00 6.66 C58.33 6.88 54.00 7.73 50.00 7.97 C46.00 8.20 41.33 8.28 36.00 8.07 C30.67 7.86 23.33 6.72 18.00 6.69 C12.67 6.67 7.00 7.63 4.00 7.92 C1.00 8.20 0.67 8.31 0.00 8.39 Q-1.60 6.79 0.00 3.81Z" fill="url(#s7)" opacity="1"/></svg>
<div class="t" style="left:609.8px;top:308.8px;font-size:8px;color:#e0e0e0;-webkit-text-stroke:0;transform:scale(.42,.5)">Acrylic Stroke 08</div>
<div class="a" style="left:595.5px;top:314.0px;width:89.5px;height:15.4px;background:#383838;border:0.4px solid #1a1a1a"></div>
<div class="t" style="left:601.8px;top:321.3px;font-size:7.2px;color:#d0d0d0;-webkit-text-stroke:0;transform:scale(.45,.5)">128</div>
<svg class="ic" style="left:610.5px;top:314.0px" width="62" height="10" viewBox="-1 0 62 10"><defs><linearGradient id="s8" x1="0" x2="1"><stop offset="0" stop-color="#fff"/><stop offset="0.55" stop-color="#f0f0f0"/><stop offset="1" stop-color="#fff" stop-opacity="0.25"/></linearGradient></defs><path d="M0.00 4.01 C0.67 3.89 1.00 3.58 4.00 3.29 C7.00 3.01 12.67 2.11 18.00 2.31 C23.33 2.50 30.67 3.95 36.00 4.49 C41.33 5.03 46.00 5.30 50.00 5.54 C54.00 5.79 58.33 5.90 60.00 5.97 Q61.00 6.30 60.00 6.63 C58.33 6.84 54.00 7.64 50.00 7.86 C46.00 8.07 41.33 8.14 36.00 7.91 C30.67 7.68 23.33 6.53 18.00 6.49 C12.67 6.46 7.00 7.42 4.00 7.71 C1.00 7.99 0.67 8.11 0.00 8.19 Q-1.60 6.73 0.00 4.01Z" fill="url(#s8)" opacity="1"/></svg>
<div class="t" style="left:609.8px;top:325.6px;font-size:8px;color:#e0e0e0;-webkit-text-stroke:0;transform:scale(.42,.5)">Acrylic Stroke 09</div>
<div class="a" style="left:595.5px;top:330.8px;width:89.5px;height:15.4px;background:#383838;border:0.4px solid #1a1a1a"></div>
<div class="t" style="left:601.8px;top:338.1px;font-size:7.2px;color:#d0d0d0;-webkit-text-stroke:0;transform:scale(.45,.5)">128</div>
<svg class="ic" style="left:610.5px;top:330.8px" width="62" height="10" viewBox="-1 0 62 10"><defs><linearGradient id="s9" x1="0" x2="1"><stop offset="0" stop-color="#fff"/><stop offset="0.5" stop-color="#f0f0f0"/><stop offset="1" stop-color="#fff" stop-opacity="0.3"/></linearGradient></defs><path d="M0.00 3.81 C0.67 3.69 1.00 3.37 4.00 3.08 C7.00 2.80 12.67 1.90 18.00 2.11 C23.33 2.31 31.00 3.77 36.00 4.33 C41.00 4.88 44.67 5.16 48.00 5.43 C51.33 5.70 54.67 5.85 56.00 5.94 Q57.00 6.30 56.00 6.66 C54.67 6.88 51.33 7.73 48.00 7.97 C44.67 8.20 41.00 8.28 36.00 8.07 C31.00 7.86 23.33 6.72 18.00 6.69 C12.67 6.67 7.00 7.63 4.00 7.92 C1.00 8.20 0.67 8.31 0.00 8.39 Q-1.60 6.79 0.00 3.81Z" fill="url(#s9)" opacity="1"/></svg>
<div class="t" style="left:609.8px;top:342.4px;font-size:8px;color:#e0e0e0;-webkit-text-stroke:0;transform:scale(.42,.5)">Acrylic Stroke 10</div>
<div class="a" style="left:595.5px;top:347.6px;width:89.5px;height:15.4px;background:#383838;border:0.4px solid #1a1a1a"></div>
<div class="t" style="left:601.8px;top:354.9px;font-size:7.2px;color:#d0d0d0;-webkit-text-stroke:0;transform:scale(.45,.5)">128</div>
<svg class="ic" style="left:610.5px;top:347.6px" width="62" height="10" viewBox="-1 0 62 10"><defs><linearGradient id="s10" x1="0" x2="1"><stop offset="0" stop-color="#fff"/><stop offset="0.5" stop-color="#f0f0f0"/><stop offset="1" stop-color="#fff" stop-opacity="0.3"/></linearGradient></defs><path d="M0.00 4.30 C0.67 4.19 1.00 3.89 4.00 3.61 C7.00 3.33 12.67 2.42 18.00 2.60 C23.33 2.79 30.67 4.22 36.00 4.74 C41.33 5.25 46.00 5.49 50.00 5.71 C54.00 5.92 58.33 5.97 60.00 6.02 Q61.00 6.30 60.00 6.58 C58.33 6.77 54.00 7.51 50.00 7.69 C46.00 7.87 41.33 7.91 36.00 7.66 C30.67 7.42 23.33 6.24 18.00 6.20 C12.67 6.15 7.00 7.11 4.00 7.39 C1.00 7.67 0.67 7.81 0.00 7.90 Q-1.60 6.64 0.00 4.30Z" fill="url(#s10)" opacity="0.75"/></svg>
<div class="t" style="left:609.8px;top:359.2px;font-size:8px;color:#e0e0e0;-webkit-text-stroke:0;transform:scale(.42,.5)">Acrylic Stroke 11</div>
<div class="a" style="left:684.8px;top:178.6px;width:5.2px;height:184.6px;background:#2a2a2a"></div>
<div class="a" style="left:687.2px;top:185.2px;width:1.9px;height:113.5px;background:#8a8a8a;border-radius:1px"></div>
<div class="a" style="left:595.4px;top:363.2px;width:94.6px;height:10.8px;background:#252525"></div>
<div class="a" style="left:595.4px;top:374px;width:94.6px;height:47.4px;background:#383838"></div>
<div class="a" style="left:597px;top:365.6px;width:1.9px;height:6.6px;background:#3c3c3c"></div>
<div class="a" style="left:602.3px;top:366px;width:20.3px;height:6.6px;background:#333;border:.6px solid #444;border-radius:2px"></div>
<div class="t" style="left:603.6px;top:367.6px;color:#f0f0f0;transform:scaleX(.78)">Transform</div>
<div class="t" style="left:624.8px;top:367.6px;color:#dcdcdc;transform:scaleX(.78)">Navigator</div>
<div class="t" style="left:644.8px;top:367.6px;color:#dcdcdc;transform:scaleX(.81)">History</div>
<svg class="ic" style="left:682px;top:365px" width="7" height="7" viewBox="0 0 7 7"><circle cx="3.5" cy="3.5" r="3.1" fill="#1e1e1e" stroke="#5a5a5a" stroke-width=".7"/><path d="M2 2.9 3.5 4.4 5 2.9" fill="none" stroke="#fff" stroke-width=".8"/></svg>
<svg class="ic" style="left:600.6px;top:386.6px" width="14" height="14" viewBox="0 0 14 14"><rect x="1.2" y="1.2" width="11.6" height="11.6" fill="#6a6a6a" stroke="#2a2a2a" stroke-width=".5"/><g fill="#7c7c7c" stroke="#2a2a2a" stroke-width=".4"><rect x=".3" y=".3" width="1.8" height="1.8"/><rect x="6.1" y=".3" width="1.8" height="1.8"/><rect x="11.9" y=".3" width="1.8" height="1.8"/><rect x=".3" y="6.1" width="1.8" height="1.8"/><rect x="11.9" y="6.1" width="1.8" height="1.8"/><rect x=".3" y="11.9" width="1.8" height="1.8"/><rect x="6.1" y="11.9" width="1.8" height="1.8"/><rect x="11.9" y="11.9" width="1.8" height="1.8"/></g></svg>
<div class="t" style="left:620.4px;top:380.8px;font-size:8.4px;color:#7a7a7a;-webkit-text-stroke:0;transform:scale(.42,.5)">X:</div>
<div class="a" style="left:625.5px;top:379.3px;width:22.5px;height:6.2px;background:#323232;border-radius:1px"></div>
<div class="t" style="left:627.0px;top:380.7px;font-size:8.6px;color:#c4c4c4;-webkit-text-stroke:0;transform:scale(.46,.5)">0 mm</div>
<div class="t" style="left:652.3px;top:380.8px;font-size:8.4px;color:#7a7a7a;-webkit-text-stroke:0;transform:scale(.42,.5)">W:</div>
<div class="a" style="left:658.8px;top:379.3px;width:22.5px;height:6.2px;background:#323232;border-radius:1px"></div>
<div class="t" style="left:660.3px;top:380.7px;font-size:8.6px;color:#c4c4c4;-webkit-text-stroke:0;transform:scale(.46,.5)">0 mm</div>
<div class="t" style="left:620.4px;top:389.8px;font-size:8.4px;color:#7a7a7a;-webkit-text-stroke:0;transform:scale(.42,.5)">Y:</div>
<div class="a" style="left:625.5px;top:388.3px;width:22.5px;height:6.2px;background:#323232;border-radius:1px"></div>
<div class="t" style="left:627.0px;top:389.7px;font-size:8.6px;color:#c4c4c4;-webkit-text-stroke:0;transform:scale(.46,.5)">0 mm</div>
<div class="t" style="left:652.3px;top:389.8px;font-size:8.4px;color:#7a7a7a;-webkit-text-stroke:0;transform:scale(.42,.5)">H:</div>
<div class="a" style="left:658.8px;top:388.3px;width:22.5px;height:6.2px;background:#323232;border-radius:1px"></div>
<div class="t" style="left:660.3px;top:389.7px;font-size:8.6px;color:#c4c4c4;-webkit-text-stroke:0;transform:scale(.46,.5)">0 mm</div>
<div class="t" style="left:620.4px;top:400.4px;font-size:8.4px;color:#7a7a7a;-webkit-text-stroke:0;transform:scale(.42,.5)">R:</div>
<div class="a" style="left:625.5px;top:398.9px;width:22.5px;height:6.2px;background:#323232;border-radius:1px"></div>
<div class="t" style="left:627.0px;top:400.29999999999995px;font-size:8.6px;color:#c4c4c4;-webkit-text-stroke:0;transform:scale(.46,.5)">0 °</div>
<svg class="ic" style="left:643.8px;top:401.29999999999995px" width="3" height="2" viewBox="0 0 3 2"><path d="M.2.2H2.8L1.5 1.7Z" fill="#aaa"/></svg>
<div class="t" style="left:652.3px;top:400.4px;font-size:8.4px;color:#7a7a7a;-webkit-text-stroke:0;transform:scale(.42,.5)">S:</div>
<div class="a" style="left:658.8px;top:398.9px;width:22.5px;height:6.2px;background:#323232;border-radius:1px"></div>
<div class="t" style="left:660.3px;top:400.29999999999995px;font-size:8.6px;color:#c4c4c4;-webkit-text-stroke:0;transform:scale(.46,.5)">0 °</div>
<svg class="ic" style="left:677.0999999999999px;top:401.29999999999995px" width="3" height="2" viewBox="0 0 3 2"><path d="M.2.2H2.8L1.5 1.7Z" fill="#aaa"/></svg>
<div class="a" style="left:686.4px;top:382.8px;width:2.3px;height:7.9px;border:.6px solid #bbb;border-radius:1.2px"></div>
<svg class="ic" style="left:667.5px;top:409.8px" width="7" height="7" viewBox="0 0 7 7"><rect x="2" y=".5" width="4.5" height="4.5" fill="none" stroke="#999" stroke-width=".6" stroke-dasharray="1 .6"/><rect x=".5" y="3.5" width="3" height="3" fill="#999"/></svg>
<svg class="ic" style="left:678.4px;top:412.2px" width="3" height="2" viewBox="0 0 3 2"><path d="M.2.3 1.5 1.6 2.8.3" fill="none" stroke="#ddd" stroke-width=".7"/></svg><!-- status bar -->
<svg class="ic" style="left:0;top:422px" width="72" height="9" viewBox="0 0 72 9">
 <g fill="#777">
  <rect x="2" y="3" width=".8" height="4"/><path d="M6 3v4L3.2 5z"/>
  <path d="M12.2 3v4L9.6 5z"/>
  <path d="M44.2 3v4L47.2 5z" fill="#eee"/>
  <path d="M50.2 3v4L53 5z"/><rect x="53.2" y="3" width=".8" height="4"/>
  <rect x="57.3" y="2.8" width="4.4" height="4.6" rx=".5" fill="none" stroke="#777" stroke-width=".7"/>
 </g>
 <circle cx="66.5" cy="4.8" r="1.9" fill="none" stroke="#ccc" stroke-width=".8"/>
 <rect x="66.5" y="5" width="2.6" height="2.6" fill="none" stroke="#ccc" stroke-width=".7"/>
</svg>
<div class="t" style="left:23.8px;top:425.2px;color:#e6e6e6;transform:scaleX(.74)">1 of 1</div>
<div class="t" style="left:76.8px;top:425.2px;color:#f4f4f4;font-weight:bold;transform:scaleX(.76)">Click</div>
<div class="t" style="left:87.2px;top:425.2px;color:#cfcfcf;transform:scaleX(.78)">or</div>
<div class="t" style="left:91.9px;top:425.2px;color:#f4f4f4;font-weight:bold;transform:scaleX(.8)">Drag</div>
<div class="t" style="left:103.1px;top:425.2px;color:#cfcfcf;transform:scaleX(.8)">to select objects.</div>
</body></html>
